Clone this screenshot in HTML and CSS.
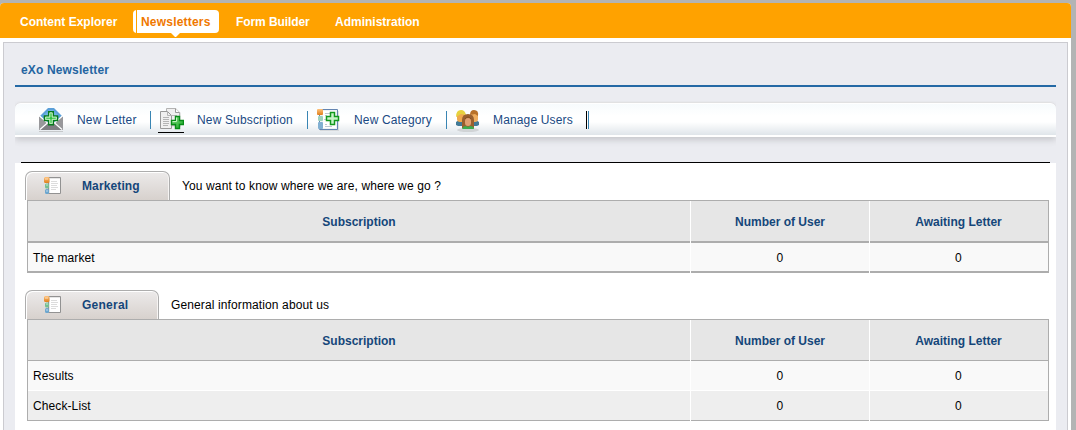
FILE: index.html
```html
<!DOCTYPE html>
<html lang="en">
<head>
<meta charset="utf-8">
<title>eXo Newsletter</title>
<link rel="stylesheet" href="styles.css">
</head>
<body>
<svg class="defs" aria-hidden="true">
  <defs>
    <linearGradient id="green" x1="0" y1="0" x2="1" y2="1"><stop offset="0" stop-color="#8be08b"/><stop offset="1" stop-color="#12a51d"/></linearGradient>
    <linearGradient id="orange" x1="0" y1="0" x2="0" y2="1"><stop offset="0" stop-color="#ffc27a"/><stop offset="1" stop-color="#df7f1c"/></linearGradient>
    <symbol id="book" viewBox="0 0 18 19">
      <path d="M4.500 1.500h12v16h-12z" fill="#e6e6e6" stroke="#929292"/>
      <path d="M6 3h10v14H6z" fill="#fff"/>
      <path d="M7 5.500h6M7 7.500h7M7 9.500h6M7 11.500h7M7 13.500h5" stroke="#dcdcdc"/>
      <rect x="0" y="1" width="5.500" height="6" rx="1.500" fill="url(#orange)"/>
      <rect x="1" y="7.500" width="4" height="5" rx="1.500" fill="#76bf91"/>
      <rect x="1" y="13" width="4" height="5" rx="1.500" fill="#6da7cf"/>
      <path d="M1 3h3M2 9h2M2 15h2" stroke="#fff" opacity=".6"/>
    </symbol>
  </defs>
</svg>
<div class="page">
  <nav class="nav">
    <a class="nav-item">Content Explorer</a>
    <a class="nav-item active">Newsletters<svg class="pointer" viewBox="0 0 9 4"><path d="M0 0h9L5 4H4z" fill="#fff"/></svg></a>
    <a class="nav-item form">Form Builder</a>
    <a class="nav-item admin">Administration</a>
  </nav>
  <main class="frame">
    <h1 class="title">eXo Newsletter</h1>
    <div class="toolbar">
      <a class="tool letter">
        <svg class="icon" viewBox="0 0 26 27">
          <path d="M2 10 10 2h6l8 8-7 7H9z" fill="#5a9fd8"/>
          <path d="M5 10l6-6h4l6 6z" fill="#6fb2e4"/>
          <path d="M1 10l9 7-9 7zM25 10l-9 7 9 7z" fill="#98989b"/>
          <path d="M1 24l9-8h6l9 8z" fill="#7e7e82"/>
          <path d="M1 9.500l8 7M25 9.500l-8 7M2 23.500l8-7M24 23.500l-8-7" fill="none" stroke="#fff" stroke-width="1.200"/>
          <path d="M1 25.500h24" stroke="#c5c8ca"/>
          <path d="M10.700 5.700h4.600v4.200h4.200v4.600h-4.200v4.200h-4.600v-4.200H6.500V9.900h4.200z" fill="#fff" stroke="#067a1c" stroke-width="1.500"/>
          <path d="M12 7h2v4.200h4.200v2H14v4.200h-2v-4.200H7.800v-2H12z" fill="#32c042" stroke="#baf3ba" stroke-width=".8"/>
        </svg><span>New Letter</span></a>
      <a class="tool subscription">
        <svg class="icon" viewBox="0 0 26 27">
          <path d="M9 2h9l5 5v14H9z" fill="#dadada" opacity=".7"/>
          <path d="M8.500 2.500h9l4 4v13h-13z" fill="#f0f0f0" stroke="#b3b3b3"/>
          <path d="M17.500 2.500v4h4" fill="#fff" stroke="#999"/>
          <path d="M2.500 5.500h7l4 4v13h-11z" fill="#f0f0f0" stroke="#999"/>
          <path d="M9.500 5.500v4h4M5 11.500h6M5 13.500h6M5 15.500h6M5 17.500h6M5 19.500h5M14 9.500h5" fill="none" stroke="#b5b5b5"/>
          <path d="M17.500 10.500h4v4h4v4h-4v4h-4v-4h-4v-4h4z" fill="url(#green)" stroke="#078c16" stroke-width="1.400"/>
          <path d="M18.500 11.500v4h-4" fill="none" stroke="#c3f5c2"/>
          <path d="M0 26.500h26" stroke="#000"/>
        </svg><span>New Subscription</span></a>
      <a class="tool category">
        <svg class="icon" viewBox="0 0 26 27">
          <path d="M4 5h19v20H4z" fill="#aaa" opacity=".3"/>
          <path d="M3.500 3.500h18v20h-18z" fill="#edf2f6" stroke="#6485b1"/>
          <path d="M7 5h13v17H7z" fill="#fff"/>
          <path d="M9 7.500h6M9 9.500h2M8 13.500h2M9 18.500h2M9 20.500h7" stroke="#bdc8d2"/>
          <rect x="1" y="3" width="6" height="6" rx="1" fill="url(#orange)"/>
          <rect x="2" y="10" width="5" height="5" rx="1" fill="#9ed2bc"/>
          <rect x="2" y="16" width="5" height="7" rx="1" fill="#81b0d2"/>
          <path d="M14.500 6.500h4v4h4v4h-4v4h-4v-4h-4v-4h4z" fill="#c9f4ca" stroke="#12981e" stroke-width="1.500"/>
        </svg><span>New Category</span></a>
      <a class="tool users">
        <svg class="icon" viewBox="0 0 26 27">
          <ellipse cx="13" cy="24" rx="11" ry="2" fill="#999" opacity=".3"/>
          <path d="M1 19v-3l3-2h6v6H3zM24 19v-3l-3-2h-6v6h7z" fill="#427a96"/>
          <rect x="2" y="7" width="8" height="9" rx="3" fill="#efa94d"/>
          <path d="M1 11q0-7 5-7 4 0 5 5L6 8z" fill="#e6d23e"/>
          <rect x="16" y="7" width="7" height="9" rx="3" fill="#efad5d"/>
          <path d="M15 9q0-5 4-5 5 0 4 6l-3-2z" fill="#b87128"/>
          <path d="M7 22v-8q0-6 6-6t6 6v8z" fill="#99602e"/>
          <rect x="10" y="12" width="6" height="8" rx="3" fill="#dfa071"/>
          <path d="M7 23q1-3 4-3l2 1 2-1q4 0 4 3z" fill="#3dac4d"/>
          <path d="M10 13q1-2 3-2 2 0 3 2" fill="none" stroke="#85501f"/>
        </svg><span>Manage Users</span></a>
    </div>
    <div class="content">
      <section>
        <header class="group">
          <div class="tab marketing"><svg class="book"><use href="#book"/></svg>Marketing</div>
          <span>You want to know where we are, where we go ?</span>
        </header>
        <div class="grid heavy">
          <div class="row head"><b>Subscription</b><b>Number of User</b><b>Awaiting Letter</b></div>
          <div class="row"><span>The market</span><span>0</span><span>0</span></div>
        </div>
      </section>
      <section>
        <header class="group">
          <div class="tab general"><svg class="book"><use href="#book"/></svg>General</div>
          <span>General information about us</span>
        </header>
        <div class="grid">
          <div class="row head"><b>Subscription</b><b>Number of User</b><b>Awaiting Letter</b></div>
          <div class="row"><span>Results</span><span>0</span><span>0</span></div>
          <div class="row alt"><span>Check-List</span><span>0</span><span>0</span></div>
        </div>
      </section>
    </div>
  </main>
</div>
</body>
</html>
```
FILE: styles.css
```css
* { box-sizing: border-box; }
body {
  margin: 0;
  padding: 3px 5px 0 0;
  height: 430px;
  overflow: hidden;
  background: #b3b4b4;
  font: 12px/14px "Liberation Sans", Arial, sans-serif;
  color: #000;
}
.defs { position: absolute; width: 0; height: 0; }
.page { height: 427px; background: #fff; border-radius: 4px 4px 0 0; overflow: hidden; }
.nav {
  display: flex;
  align-items: flex-start;
  height: 35px;
  padding: 7px 0 0 20px;
  background: #ffa200;
  color: #fff;
  font-weight: bold;
  line-height: 24px;
}
.nav-item { width: 113px; height: 23px; white-space: nowrap; }
.nav-item.active {
  position: relative;
  width: 86px;
  padding-left: 8px;
  border-radius: 4px;
  background: linear-gradient(90deg, #fff 3px, #ffa200 3px, #ffa200 4px, #fff 4px);
  color: #f07800;
  letter-spacing: .2px;
}
.pointer { position: absolute; left: 38px; top: 23px; width: 9px; height: 4px; }
.nav-item.form { width: 116px; padding-left: 17px; letter-spacing: -.08px; }
.frame {
  width: 1065px;
  height: 389px;
  margin: 4px 0 0 3px;
  padding: 0 11px;
  border: 1px solid #cbcbd0;
  border-bottom: 0;
  background: #ebecf1;
}
.title {
  height: 44px;
  margin: 0 0 16px;
  padding: 20px 0 0 6px;
  border-bottom: 2px solid #2469a5;
  color: #2465a1;
  font-size: 12px;
  line-height: 14px;
  letter-spacing: .15px;
}
.toolbar {
  display: flex;
  align-items: flex-start;
  height: 34px;
  padding: 2px 0 0 23px;
  border: solid #fff;
  border-width: 1px 0 2px;
  border-radius: 6px 6px 0 0;
  background: linear-gradient(#f7fbfd 0, #fff 12px, #fff 18px, #dfe5ea 31px);
  box-shadow: 0 -1px 1px #e0e0e2, 0 3px 6px #c6c7cb;
  clip-path: inset(-2px 0 -12px 0);
  color: #194983;
  letter-spacing: .15px;
}
.tool { display: flex; height: 27px; line-height: 28px; white-space: nowrap; }
.tool::after { content: ""; width: 1px; height: 18px; margin: 5px 0 0 auto; background: #3985b3; }
.icon { flex: none; width: 26px; height: 27px; margin-right: 13px; }
.letter { width: 113px; }
.subscription { width: 157px; padding-left: 7px; }
.category { width: 139px; padding-left: 8px; }
.category .icon { margin-right: 12px; }
.users { width: 142px; padding-left: 8px; }
.users .icon { margin-right: 12px; }
.users::after { width: 3px; background: linear-gradient(90deg, #000 1px, #fff 1px, #fff 2px, #3985b3 2px); }
.content {
  height: 268px;
  margin-top: 25px;
  padding: 0 7px 0 10px;
  background: linear-gradient(90deg, #ebecf1 6px, #000 6px, #000 1035px, #ebecf1 1035px) 0 0 / 100% 1px no-repeat, #fff;
}
section:first-child { padding-top: 9px; }
section + section { margin-top: 17px; }
.group { display: flex; gap: 12px; height: 29px; line-height: 30px; letter-spacing: .12px; }
.tab {
  display: flex;
  height: 29px;
  padding-left: 18px;
  border: 1px solid #adadad;
  border-bottom: 0;
  border-radius: 7px 7px 0 0;
  background: linear-gradient(#eceaea, #d7d1cd);
  box-shadow: inset 1px 1px #fff, inset -1px 0 #f6f4f3;
  color: #15467a;
  font-weight: bold;
  line-height: 28px;
}
.marketing { width: 145px; }
.general { width: 134px; letter-spacing: .25px; }
.book { width: 18px; height: 19px; margin: 4px 20px 0 0; }
.grid { width: 1022px; margin-left: 2px; border: 1px solid #adadad; }
.row { display: grid; grid-template-columns: 662px 1fr 179px; height: 29px; line-height: 30px; background: #f9f9f9; text-align: center; letter-spacing: .1px; }
.row > * + * { border-left: 1px solid #fff; }
.row > :last-child { padding-right: 1px; }
.row > :first-child:not(b) { padding-left: 5px; text-align: left; }
.head { height: 41px; border-bottom: 1px solid #adadad; background: #e6e6e6; color: #15467a; line-height: 42px; letter-spacing: 0; }
.alt { height: 30px; border-top: 1px solid #fff; background: #eee; line-height: 30px; }
.heavy { border-bottom-width: 2px; }
.heavy .head { height: 42px; border-bottom-width: 2px; }
.heavy .row:not(.head) { height: 28px; }
```
